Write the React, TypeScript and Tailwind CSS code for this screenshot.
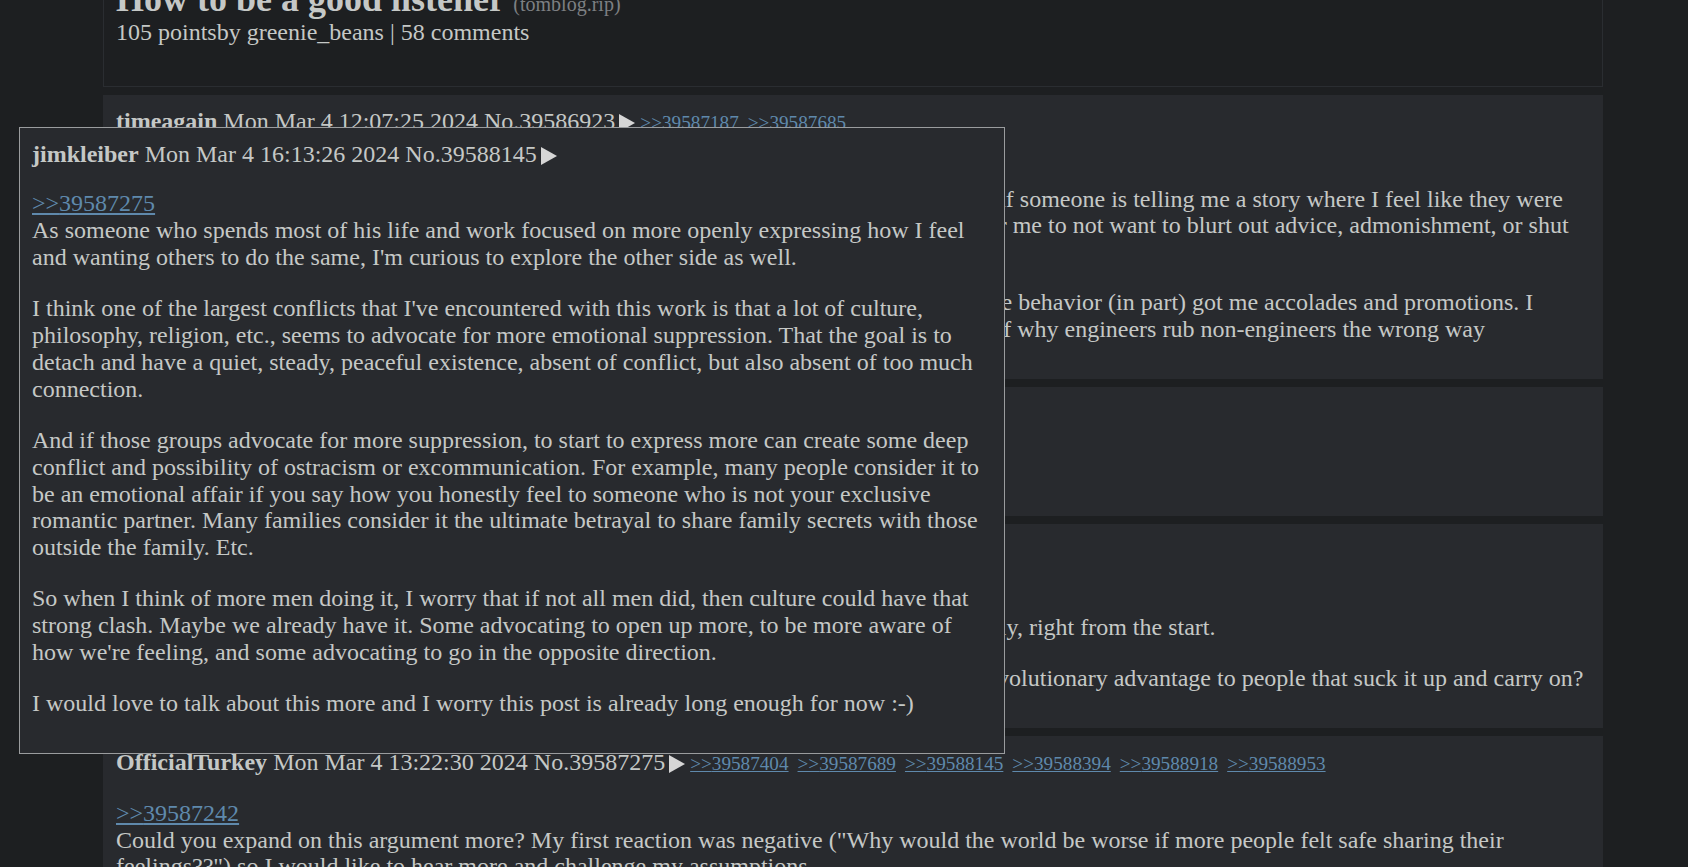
import React from "react";

const Tri = () => (
  <svg
    width="16"
    height="18"
    viewBox="0 0 16 18"
    className="ml-[4px] inline-block align-[-3px]"
  >
    <polygon points="0,0 16,9 0,18" fill="#d6d6d6" />
  </svg>
);

type HeaderProps = {
  name: string;
  date: string;
  no: string;
  replies?: string[];
};

function PostHeader({ name, date, no, replies = [] }: HeaderProps) {
  return (
    <div className="whitespace-nowrap">
      <span className="font-bold">{name}</span> {date} No.{no}
      <Tri />
      {replies.map((r, i) => (
        <a
          key={r}
          className={
            i === 0
              ? "ml-[5px] text-[19.2px] text-[#5f89ac] underline"
              : "ml-[9px] text-[19.2px] text-[#5f89ac] underline"
          }
        >
          &gt;&gt;{r}
        </a>
      ))}
    </div>
  );
}

function Quote({ id }: { id: string }) {
  return <a className="text-[#5f89ac] underline">&gt;&gt;{id}</a>;
}

function Post({
  header,
  tall = false,
  children,
}: {
  header: HeaderProps;
  tall?: boolean;
  children: React.ReactNode;
}) {
  return (
    <div
      className={
        tall
          ? "border border-[#282a2e] bg-[#282a2e] pl-[12px] pr-[8px] pt-[12px] pb-[15px] leading-[26.5px]"
          : "border border-[#282a2e] bg-[#282a2e] pl-[12px] pr-[8px] pt-[12px] pb-[12px] leading-[26.5px]"
      }
    >
      <PostHeader {...header} />
      <div className="mt-[22.5px]">{children}</div>
    </div>
  );
}

export default function App() {
  return (
    <div className="relative h-[867px] overflow-hidden bg-[#1d1f21] font-['Liberation_Serif',serif] text-[24px] leading-[26.9px] text-[#c5c8c6]">
      <div className="ml-[103px] w-[1500px] -mt-[34px]">
        <div className="border border-[#2a2d31] bg-[#1d1f21] px-[12px] pt-[12px] pb-[40px]">
          <div className="text-[36px] leading-[40px] font-bold">
            How to be a good listener{" "}
            <span className="text-[20px] leading-[20px] font-normal text-[#7d8083]">
              (tomblog.rip)
            </span>
          </div>
          <div>105 pointsby greenie_beans | 58 comments</div>
        </div>

        <div className="mt-[8.5px] flex flex-col gap-[8px]">
          <Post
            header={{
              name: "timeagain",
              date: "Mon Mar 4 12:07:25 2024",
              no: "39586923",
              replies: ["39587187", "39587685"],
            }}
          >
            <p className="mb-[24px]">
              <Quote id="39586905" />
              <br />
              I've been working on this for a while now, and the one thing I
              realized over the years is that if someone is telling me a story
              where I feel like they were wronged, or that they did something
              very wrong, it takes a whole lot of effort and control for me to
              not want to blurt out advice, admonishment, or shut down the
              conversation.
            </p>
            <p className="mb-[24px]">
              Funny enough, at my first job as an engineer, being able to do the
              exact opposite of that same behavior (in part) got me accolades
              and promotions. I suspect this is one of the biggest reasons
              behind the stereotype, and I think it explains a lot of why
              engineers rub non-engineers the wrong way
            </p>
          </Post>

          <Post
            tall
            header={{
              name: "mattgreenrocks",
              date: "Mon Mar 4 12:31:09 2024",
              no: "39587187",
            }}
          >
            <p className="mb-[24px]">
              This is a skill I wish I had learned much earlier in life.
            </p>
          </Post>

          <Post
            header={{
              name: "throwaway22032",
              date: "Mon Mar 4 13:05:41 2024",
              no: "39587242",
              replies: ["39587275"],
            }}
          >
            <p className="mb-[24px]">
              <Quote id="39586923" />
              <br />
              Boys in my experience are pretty much trained to bottle up their
              emotions, and to do it quietly, right from the start.
            </p>
            <p className="mb-[24px]">
              I do wonder whether it has always been that way for reasons.
              Could there have been some evolutionary advantage to people that
              suck it up and carry on?
            </p>
          </Post>

          <Post
            header={{
              name: "OfficialTurkey",
              date: "Mon Mar 4 13:22:30 2024",
              no: "39587275",
              replies: [
                "39587404",
                "39587689",
                "39588145",
                "39588394",
                "39588918",
                "39588953",
              ],
            }}
          >
            <p className="mb-[24px]">
              <Quote id="39587242" />
              <br />
              Could you expand on this argument more? My first reaction was
              negative ("Why would the world be worse if more people felt safe
              sharing their feelings??") so I would like to hear more and
              challenge my assumptions.
            </p>
          </Post>
        </div>
      </div>

      <div className="absolute left-[19px] top-[127px] w-[986px] border border-[#9a9c9e] bg-[#282a2e] px-[12px] pt-[13px] pb-[12px]">
        <PostHeader
          name="jimkleiber"
          date="Mon Mar 4 16:13:26 2024"
          no="39588145"
        />
        <div className="mt-[22.5px]">
          <p className="mb-[24px]">
            <Quote id="39587275" />
            <br />
            As someone who spends most of his life and work focused on more
            openly expressing how I feel and wanting others to do the same, I'm
            curious to explore the other side as well.
          </p>
          <p className="mb-[24px]">
            I think one of the largest conflicts that I've encountered with this
            work is that a lot of culture, philosophy, religion, etc., seems to
            advocate for more emotional suppression. That the goal is to detach
            and have a quiet, steady, peaceful existence, absent of conflict,
            but also absent of too much connection.
          </p>
          <p className="mb-[24px]">
            And if those groups advocate for more suppression, to start to
            express more can create some deep conflict and possibility of
            ostracism or excommunication. For example, many people consider it
            to be an emotional affair if you say how you honestly feel to
            someone who is not your exclusive romantic partner. Many families
            consider it the ultimate betrayal to share family secrets with those
            outside the family. Etc.
          </p>
          <p className="mb-[24px]">
            So when I think of more men doing it, I worry that if not all men
            did, then culture could have that strong clash. Maybe we already
            have it. Some advocating to open up more, to be more aware of how
            we're feeling, and some advocating to go in the opposite direction.
          </p>
          <p className="mb-[24px]">
            I would love to talk about this more and I worry this post is
            already long enough for now :-)
          </p>
        </div>
      </div>
    </div>
  );
}
